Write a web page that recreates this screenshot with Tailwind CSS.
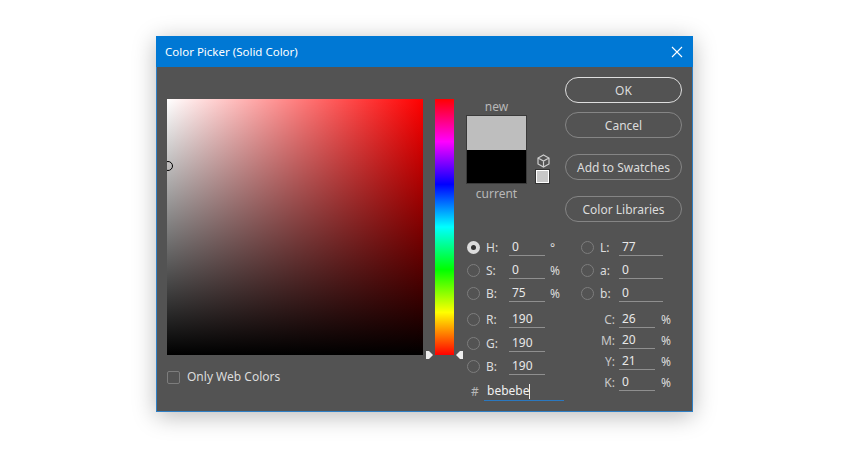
<!DOCTYPE html>
<html lang="en">
<head>
  <meta charset="UTF-8" />
  <title>Color Picker</title>
  <script src="https://cdn.jsdelivr.net/npm/@tailwindcss/browser@4"></script>
</head>
<body class="bg-white font-['Noto_Sans',sans-serif] text-[12px] text-[#dcdcdc]">
  <div class="w-[850px] h-[449px] overflow-hidden pt-[36px] pl-[156px]">

    <!-- Dialog -->
    <div class="w-[537px] h-[376px] flex flex-col bg-[#535353] border border-[#2f7fc4] border-t-[#0078d4] shadow-[0_4px_22px_rgba(0,0,0,0.28)]">

      <!-- Title bar -->
      <div class="h-[31px] shrink-0 -mx-px -mt-px bg-[#0078d4] flex items-center justify-between pl-[9px] pr-[10px] text-white text-[11.5px]">
        <span>Color Picker (Solid Color)</span>
        <svg width="12" height="12" viewBox="0 0 12 12" fill="none" stroke="#fff" stroke-width="1.1"><path d="M1 1l10 10M11 1L1 11"/></svg>
      </div>

      <div class="flex pl-[10px]">
        <!-- Colour field -->
        <div class="w-[256px] shrink-0 pt-[32px]">
          <div class="relative w-[256px] h-[256px]">
            <div class="w-full h-full overflow-hidden bg-[linear-gradient(to_top,#000,transparent),linear-gradient(to_right,#fff,#f00)]">
              <div class="ml-[-4px] mt-[62px] w-[10px] h-[10px] rounded-full border border-black"></div>
            </div>
            <svg class="absolute left-[258px] top-[251px]" width="9" height="10" viewBox="0 0 9 10"><path d="M1 1h3l4 4-4 4H1z" fill="#eee"/></svg>
          </div>
          <label class="flex items-center mt-[15px] h-[14px]">
            <span class="w-[13px] h-[13px] rounded-[2px] border border-[#7d7d7d]"></span>
            <span class="ml-[7px]">Only Web Colors</span>
          </label>
        </div>

        <!-- Hue strip -->
        <div class="ml-[12px] w-[19px] shrink-0 pt-[32px]">
          <div class="relative w-[19px] h-[256px] bg-[linear-gradient(to_bottom,#f00,#f0f,#00f,#0ff,#0f0,#ff0,#f00)]">
            <svg class="absolute left-[20px] top-[251px]" width="9" height="10" viewBox="0 0 9 10"><path d="M8 1H5L1 5l4 4h3z" fill="#eee"/></svg>
          </div>
        </div>

        <!-- Right side -->
        <div class="ml-[12px] w-[228px] shrink-0">
          <div class="flex h-[169px]">
            <!-- Swatches -->
            <div class="w-[61px] shrink-0 pt-[31px] text-center text-[#b8b8b8]">
              <div class="h-[17px] leading-[18px]">new</div>
              <div class="w-[61px] h-[69px] border border-[#3a3a3a] flex flex-col">
                <div class="h-[34px] bg-[#bebebe]"></div>
                <div class="flex-1 bg-black"></div>
              </div>
              <div class="h-[18px] leading-[20px]">current</div>
            </div>
            <!-- Gamut icons -->
            <div class="w-[38px] shrink-0 pt-[87px] pl-[9px]">
              <svg class="ml-[1px]" width="13" height="14" viewBox="0 0 13 14" fill="none" stroke="#cfcfcf" stroke-width="1.2"><path d="M6.5 1l5.5 3v6l-5.500 3L1 10V4zM1 4l5.500 3L12 4M6.500 7v6"/></svg>
              <div class="mt-[2px] w-[13px] h-[13px] bg-[#c8c8c8] border border-white outline outline-[#333]"></div>
            </div>
            <!-- Buttons -->
            <div class="w-[117px] shrink-0 pt-[10px] text-center">
              <div class="h-[26px] leading-[25px] rounded-[13px] border border-[#dedede]">OK</div>
              <div class="mt-[9px] h-[26px] leading-[26px] rounded-[13px] border border-[#858585]">Cancel</div>
              <div class="mt-[16px] h-[26px] leading-[26px] rounded-[13px] border border-[#858585]">Add to Swatches</div>
              <div class="mt-[16px] h-[26px] leading-[26px] rounded-[13px] border border-[#858585]">Color Libraries</div>
            </div>
          </div>

          <!-- Value fields -->
          <div class="flex">
            <div class="w-[114px] shrink-0">
              <div class="h-[23px] flex items-center">
                <span class="ml-px w-[13px] h-[13px] rounded-full bg-[#dcdcdc] flex items-center justify-center"><span class="w-[5px] h-[5px] rounded-full bg-[#333]"></span></span>
                <span class="ml-[6px] w-[23px]">H:</span>
                <span class="w-[36px] h-[17px] pl-[3px] leading-[16px] border-b border-[#8f8f8f] text-[#e8e8e8]">0</span>
                <span class="ml-[5px]">°</span>
              </div>
              <div class="h-[23px] flex items-center">
                <span class="ml-px w-[13px] h-[13px] rounded-full border border-[#7d7d7d]"></span>
                <span class="ml-[6px] w-[23px]">S:</span>
                <span class="w-[36px] h-[17px] pl-[3px] leading-[16px] border-b border-[#8f8f8f] text-[#e8e8e8]">0</span>
                <span class="ml-[5px]">%</span>
              </div>
              <div class="h-[23px] flex items-center">
                <span class="ml-px w-[13px] h-[13px] rounded-full border border-[#7d7d7d]"></span>
                <span class="ml-[6px] w-[23px]">B:</span>
                <span class="w-[36px] h-[17px] pl-[3px] leading-[16px] border-b border-[#8f8f8f] text-[#e8e8e8]">75</span>
                <span class="ml-[5px]">%</span>
              </div>
              <div class="mt-[3px] h-[23px] flex items-center">
                <span class="ml-px w-[13px] h-[13px] rounded-full border border-[#7d7d7d]"></span>
                <span class="ml-[6px] w-[23px]">R:</span>
                <span class="w-[36px] h-[17px] pl-[3px] leading-[16px] border-b border-[#8f8f8f] text-[#e8e8e8]">190</span>
              </div>
              <div class="mt-px h-[23px] flex items-center">
                <span class="ml-px w-[13px] h-[13px] rounded-full border border-[#7d7d7d]"></span>
                <span class="ml-[6px] w-[23px]">G:</span>
                <span class="w-[36px] h-[17px] pl-[3px] leading-[16px] border-b border-[#8f8f8f] text-[#e8e8e8]">190</span>
              </div>
              <div class="h-[23px] flex items-center">
                <span class="ml-px w-[13px] h-[13px] rounded-full border border-[#7d7d7d]"></span>
                <span class="ml-[6px] w-[23px]">B:</span>
                <span class="w-[36px] h-[17px] pl-[3px] leading-[16px] border-b border-[#8f8f8f] text-[#e8e8e8]">190</span>
              </div>
              <div class="mt-[2px] h-[23px] flex items-center">
                <span class="ml-[5px] w-[13px] text-[#b8b8b8]">#</span>
                <span class="w-[80px] h-[19px] pl-[3px] border-b border-[#2a78c0] text-[#f0f0f0] flex items-center">bebebe<span class="w-px h-[15px] bg-[#eee]"></span></span>
              </div>
            </div>

            <div class="flex-1">
              <div class="h-[23px] flex items-center">
                <span class="ml-px w-[13px] h-[13px] rounded-full border border-[#7d7d7d]"></span>
                <span class="ml-[6px] w-[19px]">L:</span>
                <span class="w-[44px] h-[17px] pl-[3px] leading-[16px] border-b border-[#8f8f8f] text-[#e8e8e8]">77</span>
              </div>
              <div class="h-[23px] flex items-center">
                <span class="ml-px w-[13px] h-[13px] rounded-full border border-[#7d7d7d]"></span>
                <span class="ml-[6px] w-[19px]">a:</span>
                <span class="w-[44px] h-[17px] pl-[3px] leading-[16px] border-b border-[#8f8f8f] text-[#e8e8e8]">0</span>
              </div>
              <div class="h-[23px] flex items-center">
                <span class="ml-px w-[13px] h-[13px] rounded-full border border-[#7d7d7d]"></span>
                <span class="ml-[6px] w-[19px]">b:</span>
                <span class="w-[44px] h-[17px] pl-[3px] leading-[16px] border-b border-[#8f8f8f] text-[#e8e8e8]">0</span>
              </div>
              <div class="pt-[4px]">
                <div class="h-[21px] flex items-center">
                  <span class="w-[39px] pr-[4px] text-right text-[#c8c8c8]">C:</span>
                  <span class="w-[36px] h-[17px] pl-[3px] leading-[16px] border-b border-[#8f8f8f] text-[#e8e8e8]">26</span>
                  <span class="ml-[6px]">%</span>
                </div>
                <div class="h-[21px] flex items-center">
                  <span class="w-[39px] pr-[4px] text-right text-[#c8c8c8]">M:</span>
                  <span class="w-[36px] h-[17px] pl-[3px] leading-[16px] border-b border-[#8f8f8f] text-[#e8e8e8]">20</span>
                  <span class="ml-[6px]">%</span>
                </div>
                <div class="h-[21px] flex items-center">
                  <span class="w-[39px] pr-[4px] text-right text-[#c8c8c8]">Y:</span>
                  <span class="w-[36px] h-[17px] pl-[3px] leading-[16px] border-b border-[#8f8f8f] text-[#e8e8e8]">21</span>
                  <span class="ml-[6px]">%</span>
                </div>
                <div class="h-[21px] flex items-center">
                  <span class="w-[39px] pr-[4px] text-right text-[#c8c8c8]">K:</span>
                  <span class="w-[36px] h-[17px] pl-[3px] leading-[16px] border-b border-[#8f8f8f] text-[#e8e8e8]">0</span>
                  <span class="ml-[6px]">%</span>
                </div>
              </div>
            </div>
          </div>
        </div>
      </div>
    </div>
  </div>
</body>
</html>
